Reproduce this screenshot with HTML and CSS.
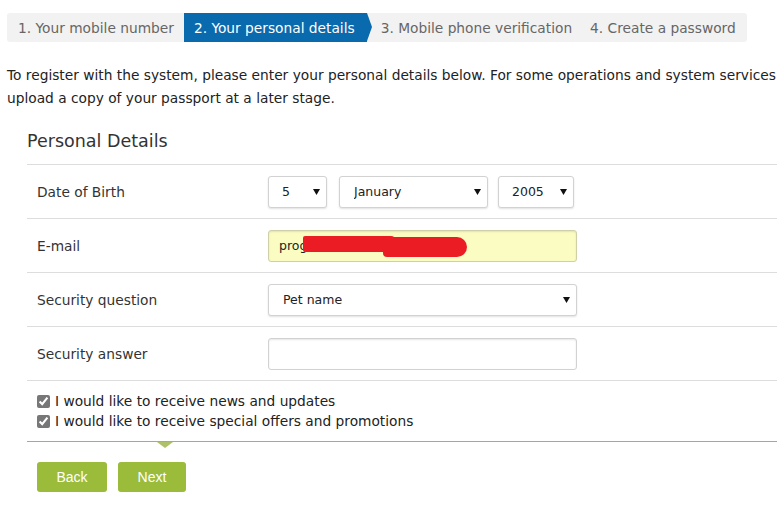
FILE: index.html
```html
<!DOCTYPE html>
<html>
<head>
<meta charset="utf-8">
<link rel="stylesheet" href="styles.css">
</head>
<body>
<div class="page">
  <ol class="steps">
    <li class="step">1. Your mobile number</li>
    <li class="step active">2. Your personal details</li>
    <li class="step">3. Mobile phone verification</li>
    <li class="step">4. Create a password</li>
  </ol>
  <p class="intro">To register with the system, please enter your personal details below. For some operations and system services you will need to<br>upload a copy of your passport at a later stage.</p>
  <div class="panel">
    <h2 class="panel-title">Personal Details</h2>
    <div class="row">
      <label class="label">Date of Birth</label>
      <div class="field dob">
        <select class="sel sel-day"><option>5</option></select>
        <select class="sel sel-month"><option>January</option></select>
        <select class="sel sel-year"><option>2005</option></select>
      </div>
    </div>
    <div class="row">
      <label class="label">E-mail</label>
      <div class="field">
        <div class="input email">prog<span class="redact redact-a"></span><span class="redact redact-b"></span></div>
      </div>
    </div>
    <div class="row">
      <label class="label">Security question</label>
      <div class="field">
        <select class="sel sel-wide"><option>Pet name</option></select>
      </div>
    </div>
    <div class="row">
      <label class="label">Security answer</label>
      <div class="field">
        <div class="input"></div>
      </div>
    </div>
    <div class="checks">
      <label class="check"><input type="checkbox" checked> I would like to receive news and updates</label>
      <label class="check"><input type="checkbox" checked> I would like to receive special offers and promotions</label>
    </div>
    <div class="divider"><span class="notch"></span></div>
    <div class="actions">
      <button class="btn btn-back">Back</button>
      <button class="btn btn-next">Next</button>
    </div>
  </div>
</div>
</body>
</html>
```

FILE: styles.css
```css
* { box-sizing: border-box; }
html, body { margin: 0; padding: 0; }
body {
  font-family: "DejaVu Sans", Verdana, sans-serif;
  color: #333;
  background: #fff;
  overflow: hidden;
  width: 777px;
  height: 508px;
}
.page { width: 1000px; padding-top: 13px; }
.steps {
  list-style: none;
  margin: 0 0 0 7px;
  padding: 0;
  display: flex;
  width: 740px;
  height: 29px;
  background: #f2f2f2;
  border-radius: 3px;
}
.step {
  font-size: 13.75px;
  line-height: 30px;
  padding: 0 10px 0 11px;
  color: #666;
  white-space: nowrap;
  position: relative;
}
.step.active {
  background: #0a6aae;
  color: #fff;
  padding: 0 12px 0 10px;
  margin-right: 5px;
}
.step.active::after {
  content: "";
  position: absolute;
  right: -5px;
  top: 0;
  border-top: 14.5px solid transparent;
  border-bottom: 14.5px solid transparent;
  border-left: 5px solid #0a6aae;
}
.step:nth-child(3) { padding-left: 9px; padding-right: 9px; }
.step:nth-child(4) { padding-left: 9px; }
.intro {
  margin: 22px 0 0 7px;
  width: 985px;
  font-size: 13.75px;
  line-height: 23px;
  color: #222;
  white-space: nowrap;
}
.panel { margin-left: 27px; width: 850px; }
.panel-title {
  margin: 0;
  padding: 19px 0 11px;
  font-size: 17.5px;
  font-weight: normal;
  line-height: 24px;
  color: #333;
  border-bottom: 1px solid #ddd;
}
.row {
  display: flex;
  align-items: center;
  height: 54px;
  border-bottom: 1px solid #ddd;
}
.label {
  width: 241px;
  padding-left: 10px;
  font-size: 13.75px;
  color: #333;
}
.field { display: flex; align-items: center; }
.dob { gap: 12px; }
.sel {
  -webkit-appearance: none;
  appearance: none;
  font-family: "DejaVu Sans", Verdana, sans-serif;
  font-size: 12.5px;
  color: #222;
  height: 32px;
  border: 1px solid #d2d2d2;
  border-radius: 3px;
  background: #fff url("data:image/svg+xml;utf8,<svg xmlns='http://www.w3.org/2000/svg' width='7' height='6'><path d='M0 0h7L3.5 6z' fill='%23111'/></svg>") no-repeat right 6px center;
  box-shadow: 0 1px 2px rgba(0,0,0,0.12);
  padding: 0 0 0 14px;
  outline: none;
}
.sel-day { width: 59px; padding-left: 13px; }
.sel-month { width: 149px; }
.sel-year { width: 76px; padding-left: 13px; margin-left: -2px; }
.sel-wide { width: 309px; }
.input {
  width: 309px;
  height: 32px;
  border: 1px solid #d2d2d2;
  border-radius: 3px;
  box-shadow: inset 0 1px 2px rgba(0,0,0,0.1);
  background: #fff;
  font-size: 12.5px;
  line-height: 30px;
  padding-left: 10px;
  color: #222;
  position: relative;
}
.input.email { background: #fafcc2; border-color: #cfcfa8; }
.redact { position: absolute; background: #ec1c24; }
.redact-a { left: 34px; top: 5px; width: 92px; height: 16px; border-radius: 2px 4px 4px 2px; }
.redact-b { left: 114px; top: 6px; width: 84px; height: 20px; border-radius: 3px 10px 10px 4px; }
.checks { padding: 10px 0 10px 10px; }
.check {
  display: flex;
  align-items: center;
  gap: 5px;
  height: 20px;
  font-size: 13.75px;
  color: #222;
}
.check input { margin: 0; width: 13px; height: 13px; accent-color: #777; }
.divider {
  height: 0;
  border-top: 1px solid #a3b55c;
  position: relative;
}
.notch {
  position: absolute;
  left: 130px;
  top: 0;
  border-left: 8px solid transparent;
  border-right: 8px solid transparent;
  border-top: 6px solid #aec06a;
}
.actions { display: flex; gap: 11px; padding: 20px 0 0 10px; }
.btn {
  height: 30px;
  border: none;
  border-radius: 3px;
  background: #9bbb3b;
  color: #fff;
  font-family: "Liberation Sans", Arial, sans-serif;
  font-size: 14px;
  padding: 0;
}
.btn-back { width: 70px; }
.btn-next { width: 68px; }
```
